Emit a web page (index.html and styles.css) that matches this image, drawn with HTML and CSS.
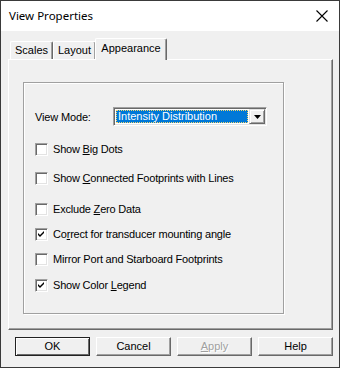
FILE: index.html
```html
<!DOCTYPE html>
<html>
<head>
    <link rel="stylesheet" href="styles.css">
</head>
<body>
    <div class="window">
        <div class="titlebar">
            <span class="title">View Properties</span>
            <svg class="close" width="12" height="12" viewBox="0 0 12 12">
                <path d="M0.5 0.5 L11.5 11.5 M11.5 0.5 L0.5 11.5" stroke="#000" stroke-width="1.1" fill="none"/>
            </svg>
        </div>

        <div class="client">
            <div class="tabs">
                <div class="tab tab-scales">Scales</div>
                <div class="tab tab-layout">Layout</div>
                <div class="tab tab-active">Appearance</div>
            </div>

            <div class="panel">
                <div class="groupbox">
                    <div class="mode-row">
                        <span class="mode-label">View Mode:</span>
                        <div class="select">
                            <div class="select-value"><span class="focus">Intensity Distribution</span></div>
                            <div class="select-btn">
                                <svg width="7" height="4" viewBox="0 0 7 4"><path d="M0 0 H7 L3.5 4 Z" fill="#000"/></svg>
                            </div>
                        </div>
                    </div>

                    <!-- check rows -->
                    <div class="check row1"><span class="box"></span><span>Show <u>B</u>ig Dots</span></div>
                    <div class="check row2"><span class="box"></span><span>Show <u>C</u>onnected Footprints with Lines</span></div>
                    <div class="check row3"><span class="box"></span><span>Exclude <u>Z</u>ero Data</span></div>
                    <div class="check row4"><span class="box"><svg width="7" height="7" viewBox="0 0 7 7"><path d="M0 2 L2 4 L6 0 V2 L2 6 L0 4 Z" fill="#000"/></svg></span><span>Co<u>r</u>rect for transducer mounting angle</span></div>
                    <div class="check row5"><span class="box"></span><span>Mirror Port and Starboard Footprints</span></div>
                    <div class="check row6"><span class="box"><svg width="7" height="7" viewBox="0 0 7 7"><path d="M0 2 L2 4 L6 0 V2 L2 6 L0 4 Z" fill="#000"/></svg></span><span>Show Color <u>L</u>egend</span></div>
                </div>
            </div>

            <div class="buttons">
                <div class="btn btn-default">OK</div>
                <div class="btn">Cancel</div>
                <div class="btn btn-disabled"><u>A</u>pply</div>
                <div class="btn">Help</div>
            </div>
        </div>
    </div>
</body>
</html>
```

FILE: styles.css
```css
body {
    margin: 0;
    font-family: "Liberation Sans", Arial, sans-serif;
    font-size: 11px;
    color: #000;
    background: #f0f0f0;
}

u {
    text-decoration: underline;
    text-underline-offset: 1px;
}

.window {
    width: 340px;
    height: 368px;
    box-sizing: border-box;
    border: 1px solid #3a3a3a;
    background: #f0f0f0;
}

.titlebar {
    height: 30px;
    background: #fff;
    display: flex;
    align-items: center;
    justify-content: space-between;
    padding: 0 11px 0 8px;
}

.title {
    font-family: "Noto Sans", sans-serif;
    font-size: 11.5px;
    padding-bottom: 1px;
}

.client {
    padding: 7px 0 0 7px;
}

/* tab strip */
.tabs {
    display: flex;
    align-items: flex-end;
    height: 21px;
    padding-left: 2px;
}

.tab {
    height: 17px;
    line-height: 17px;
    text-align: center;
    border-top: 1px solid #fff;
    border-left: 1px solid #fff;
    border-right: 1px solid #696969;
    box-shadow: inset -1px 0 0 #a0a0a0;
    border-radius: 2px 2px 0 0;
    box-sizing: content-box;
}

.tab-scales {
    width: 41px;
}

.tab-layout {
    width: 41px;
}

.tab-active {
    position: relative;
    z-index: 1;
    width: 70px;
    height: 21px;
    line-height: 19px;
    margin-bottom: -1px;
    margin-left: -1px;
    background: #f0f0f0;
}

/* property page */
.panel {
    width: 325px;
    height: 271px;
    box-sizing: border-box;
    border-top: 1px solid #fff;
    border-left: 1px solid #fff;
    border-right: 1px solid #696969;
    border-bottom: 1px solid #696969;
    box-shadow: inset -1px -1px 0 #a0a0a0;
    padding: 22px 0 0 14px;
}

.groupbox {
    width: 261px;
    height: 232px;
    box-sizing: border-box;
    border: 1px solid #a0a0a0;
    box-shadow: inset 1px 1px 0 #fff, 1px 1px 0 #fff;
    padding: 24px 0 0 11px;
}

.mode-row {
    display: flex;
    align-items: center;
    height: 19px;
}

.mode-label {
    width: 78px;
    letter-spacing: -0.15px;
}

.select {
    width: 154px;
    height: 19px;
    box-sizing: border-box;
    display: flex;
    background: #fff;
    border-top: 1px solid #a0a0a0;
    border-left: 1px solid #a0a0a0;
    border-right: 1px solid #fff;
    border-bottom: 1px solid #fff;
    box-shadow: inset 1px 1px 0 #696969, inset -1px -1px 0 #e3e3e3;
    padding: 2px;
}

.select-value {
    flex: 1;
    background: #0078d7;
    color: #fff;
    margin-right: 1px;
    display: flex;
}

.focus {
    flex: 1;
    border: 1px dotted #f5d76e;
    line-height: 11px;
    padding-left: 1px;
}

.select-btn {
    width: 16px;
    display: flex;
    align-items: center;
    justify-content: center;
    background: #f0f0f0;
    border-top: 1px solid #e3e3e3;
    border-left: 1px solid #e3e3e3;
    border-right: 1px solid #696969;
    border-bottom: 1px solid #696969;
    box-shadow: inset 1px 1px 0 #fff, inset -1px -1px 0 #a0a0a0;
    margin: -1px -1px -1px 0;
    box-sizing: border-box;
}

.check {
    display: flex;
    align-items: center;
    height: 13px;
    line-height: 13px;
    letter-spacing: -0.2px;
}

.row1 { margin-top: 17px; }
.row2 { margin-top: 16px; }
.row3 { margin-top: 18px; }
.row4 { margin-top: 12px; }
.row5 { margin-top: 12px; }
.row6 { margin-top: 13px; }

.box {
    width: 13px;
    height: 13px;
    box-sizing: border-box;
    margin-right: 5px;
    background: #fff;
    border-top: 1px solid #a0a0a0;
    border-left: 1px solid #a0a0a0;
    border-right: 1px solid #fff;
    border-bottom: 1px solid #fff;
    box-shadow: inset 1px 1px 0 #696969, inset -1px -1px 0 #e3e3e3;
    display: flex;
    align-items: center;
    justify-content: center;
}

/* buttons */
.buttons {
    display: flex;
    gap: 6px;
    margin-top: 7px;
    padding-left: 7px;
}

.btn {
    width: 75px;
    height: 19px;
    box-sizing: border-box;
    text-align: center;
    line-height: 17px;
    border-top: 1px solid #fff;
    border-left: 1px solid #fff;
    border-right: 1px solid #696969;
    border-bottom: 1px solid #696969;
    box-shadow: inset -1px -1px 0 #a0a0a0;
}

.btn-default {
    border: 1px solid #222;
    box-shadow: inset 1px 1px 0 #fff, inset -1px -1px 0 #696969;
}

.btn-disabled {
    color: #a0a0a0;
    text-shadow: 1px 1px 0 #fff;
}
```
